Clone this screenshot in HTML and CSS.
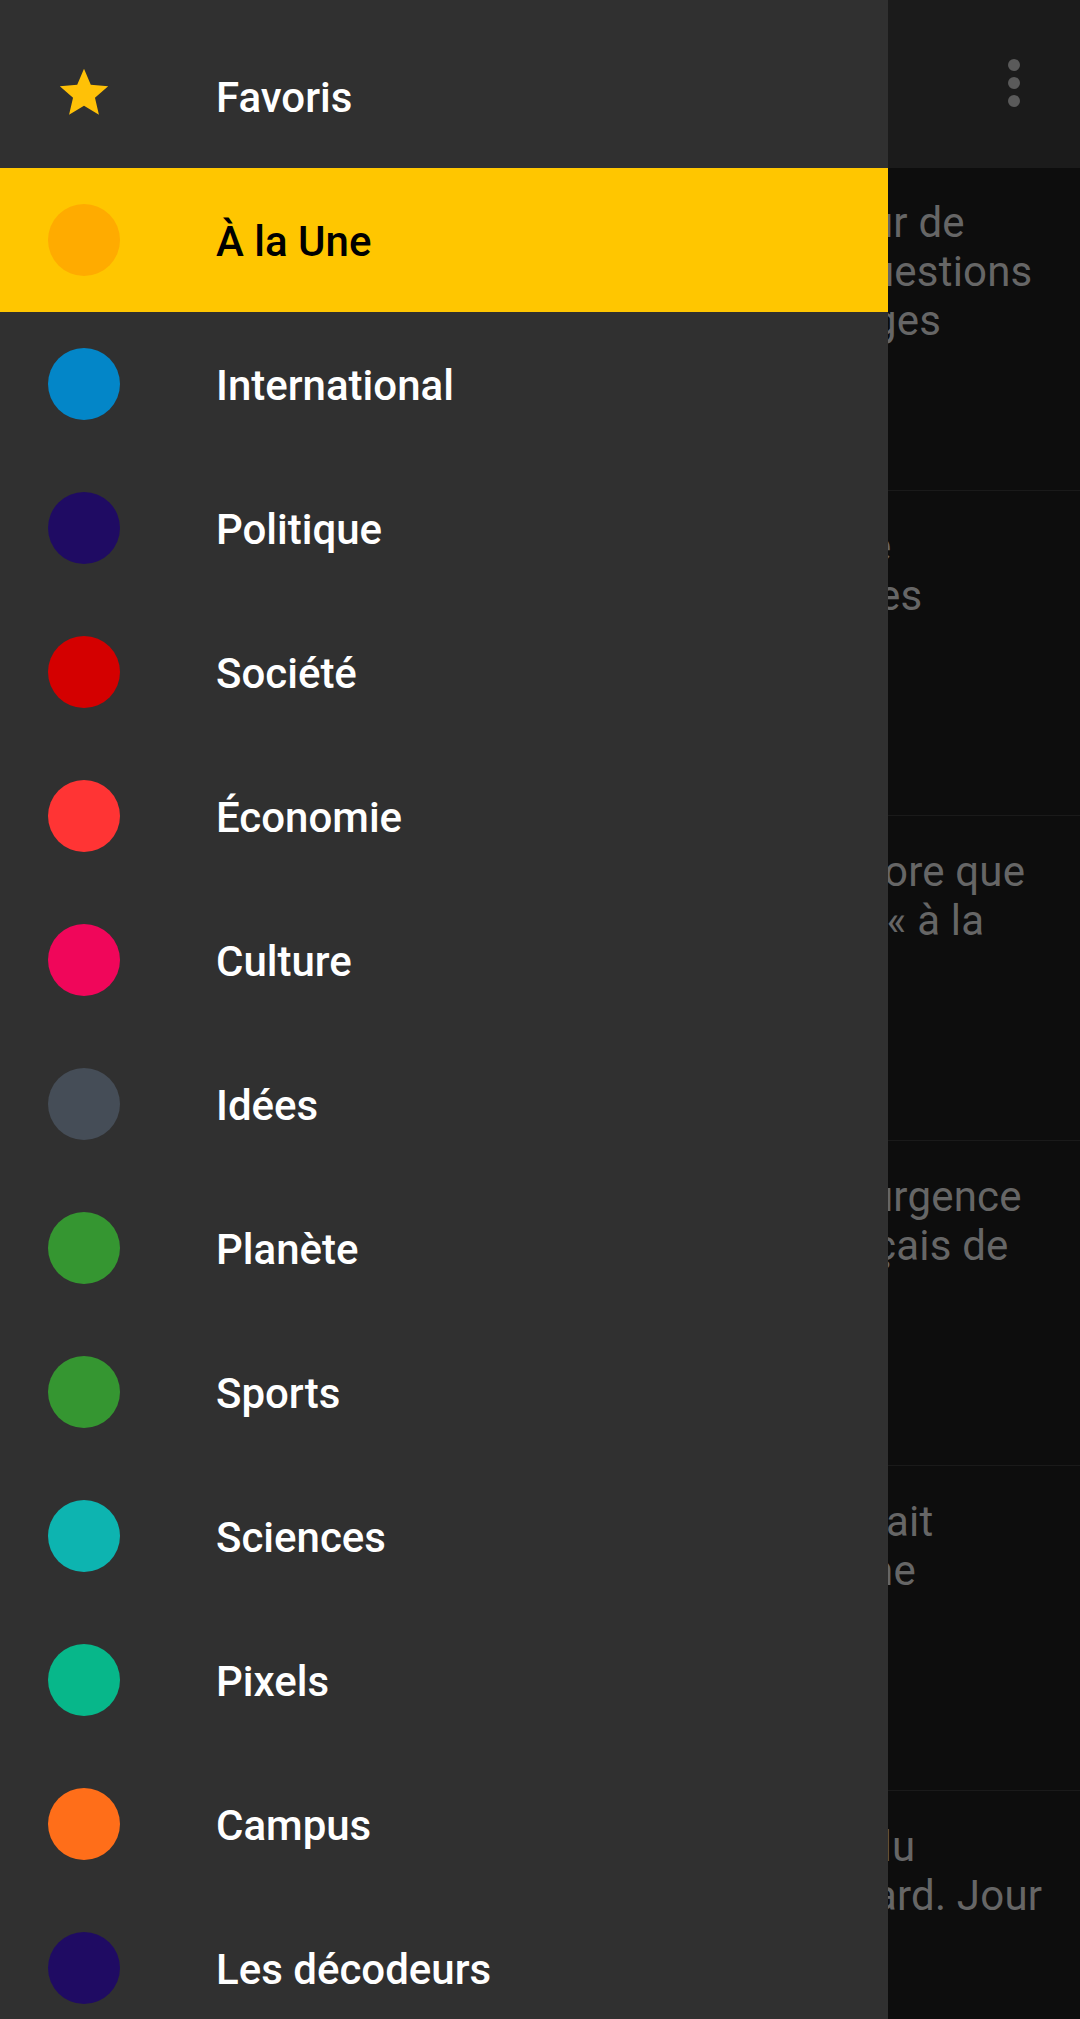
FILE: index.html
```html
<!DOCTYPE html>
<html lang="fr">
<head>
<meta charset="utf-8">
<title>Le Monde</title>
<link rel="stylesheet" href="styles.css">
</head>
<body>
<div class="screen">
  <div class="app">
    <header class="topbar">
      <svg class="more" width="36" height="72" viewBox="0 0 36 72" aria-hidden="true">
        <circle cx="18" cy="18" r="6"/>
        <circle cx="18" cy="36" r="6"/>
        <circle cx="18" cy="54" r="6"/>
      </svg>
    </header>
    <div class="list">
      <article class="card first">
        <div class="ln x870">ur de</div>
        <div class="ln x871">uestions</div>
        <div class="ln x873">ges</div>
      </article>
      <article class="card">
        <div class="ln x869">e</div>
        <div class="ln x878">es</div>
      </article>
      <article class="card">
        <div class="ln x884">ore que</div>
        <div class="ln x876">&nbsp;« à la</div>
      </article>
      <article class="card">
        <div class="ln x870">urgence</div>
        <div class="ln x874">çais de</div>
      </article>
      <article class="card">
        <div class="ln x886">ait</div>
        <div class="ln x870">ne</div>
      </article>
      <article class="card">
        <div class="ln x868">du</div>
        <div class="ln x874">ard. Jour</div>
      </article>
    </div>
  </div>

  <nav class="drawer">
    <a class="item fav">
      <span class="ico">
        <svg class="star" width="58" height="58" viewBox="0 0 24 24" aria-hidden="true">
          <path d="M12 17.27L18.18 21l-1.64-7.03L22 9.24l-7.19-.61L12 2 9.19 8.63 2 9.24l5.46 4.73L5.82 21z"/>
        </svg>
      </span>
      <span class="label">Favoris</span>
    </a>
    <a class="item active"><span class="ico"><span class="dot c-une"></span></span><span class="label">À la Une</span></a>
    <a class="item"><span class="ico"><span class="dot c-int"></span></span><span class="label">International</span></a>
    <a class="item"><span class="ico"><span class="dot c-pol"></span></span><span class="label">Politique</span></a>
    <a class="item"><span class="ico"><span class="dot c-soc"></span></span><span class="label">Société</span></a>
    <a class="item"><span class="ico"><span class="dot c-eco"></span></span><span class="label">Économie</span></a>
    <a class="item"><span class="ico"><span class="dot c-cul"></span></span><span class="label">Culture</span></a>
    <a class="item"><span class="ico"><span class="dot c-ide"></span></span><span class="label">Idées</span></a>
    <a class="item"><span class="ico"><span class="dot c-pla"></span></span><span class="label">Planète</span></a>
    <a class="item"><span class="ico"><span class="dot c-spo"></span></span><span class="label">Sports</span></a>
    <a class="item"><span class="ico"><span class="dot c-sci"></span></span><span class="label">Sciences</span></a>
    <a class="item"><span class="ico"><span class="dot c-pix"></span></span><span class="label">Pixels</span></a>
    <a class="item"><span class="ico"><span class="dot c-cam"></span></span><span class="label">Campus</span></a>
    <a class="item"><span class="ico"><span class="dot c-dec"></span></span><span class="label">Les décodeurs</span></a>
  </nav>
</div>
</body>
</html>
```

FILE: styles.css
```css
* { box-sizing: border-box; }

html, body {
  margin: 0;
  padding: 0;
  background: #0d0d0d;
}

body {
  font-family: Roboto, "Noto Sans", "Liberation Sans", sans-serif;
}

.screen {
  position: relative;
  width: 1080px;
  height: 2019px;
  overflow: hidden;
  background: #0d0d0d;
}

.app {
  display: flex;
  flex-direction: column;
}

.topbar {
  height: 168px;
  background: #1b1b1b;
  display: flex;
  justify-content: flex-end;
  align-items: center;
  padding-right: 48px;
}

.more {
  display: block;
  fill: #5a5a5a;
  margin-bottom: 2px;
}

.list {
  display: flex;
  flex-direction: column;
}

.card {
  height: 325px;
  border-bottom: 1px solid #1a1a1a;
  padding-top: 31px;
  color: #666666;
  font-size: 42px;
  line-height: 49px;
  font-weight: 400;
  letter-spacing: 0.2px;
  white-space: nowrap;
}

.card.first {
  height: 323px;
  padding-top: 30px;
}

.x868 { padding-left: 868px; }
.x869 { padding-left: 869px; }
.x870 { padding-left: 870px; }
.x871 { padding-left: 871px; }
.x873 { padding-left: 873px; }
.x874 { padding-left: 874px; }
.x876 { padding-left: 876px; }
.x878 { padding-left: 878px; }
.x884 { padding-left: 884px; }
.x886 { padding-left: 886px; }

/* navigation drawer (overlay) */
.drawer {
  position: absolute;
  left: 0;
  top: 0;
  width: 888px;
  height: 2019px;
  background: #303030;
  padding-top: 24px;
  display: flex;
  flex-direction: column;
}

.item {
  height: 144px;
  flex: 0 0 144px;
  display: flex;
  align-items: center;
  color: #ffffff;
  text-decoration: none;
}

.item.active {
  background: #ffc600;
  color: #000000;
}

.ico {
  width: 72px;
  height: 72px;
  margin-left: 48px;
  display: flex;
  align-items: center;
  justify-content: center;
}

.star {
  fill: #ffc107;
  display: block;
  margin-bottom: 6px;
}

.dot {
  width: 72px;
  height: 72px;
  border-radius: 50%;
  display: block;
}

.label {
  margin-left: 96px;
  font-size: 42px;
  font-weight: 500;
  line-height: 49px;
  padding-top: 3px;
  white-space: nowrap;
}

.c-une { background: #ffab00; }
.c-int { background: #0386c8; }
.c-pol { background: #1f0b63; }
.c-soc { background: #d40000; }
.c-eco { background: #ff3434; }
.c-cul { background: #f0065a; }
.c-ide { background: #454d57; }
.c-pla { background: #359631; }
.c-spo { background: #359631; }
.c-sci { background: #0db4b0; }
.c-pix { background: #07b78a; }
.c-cam { background: #ff6e19; }
.c-dec { background: #1f0b63; }
```
